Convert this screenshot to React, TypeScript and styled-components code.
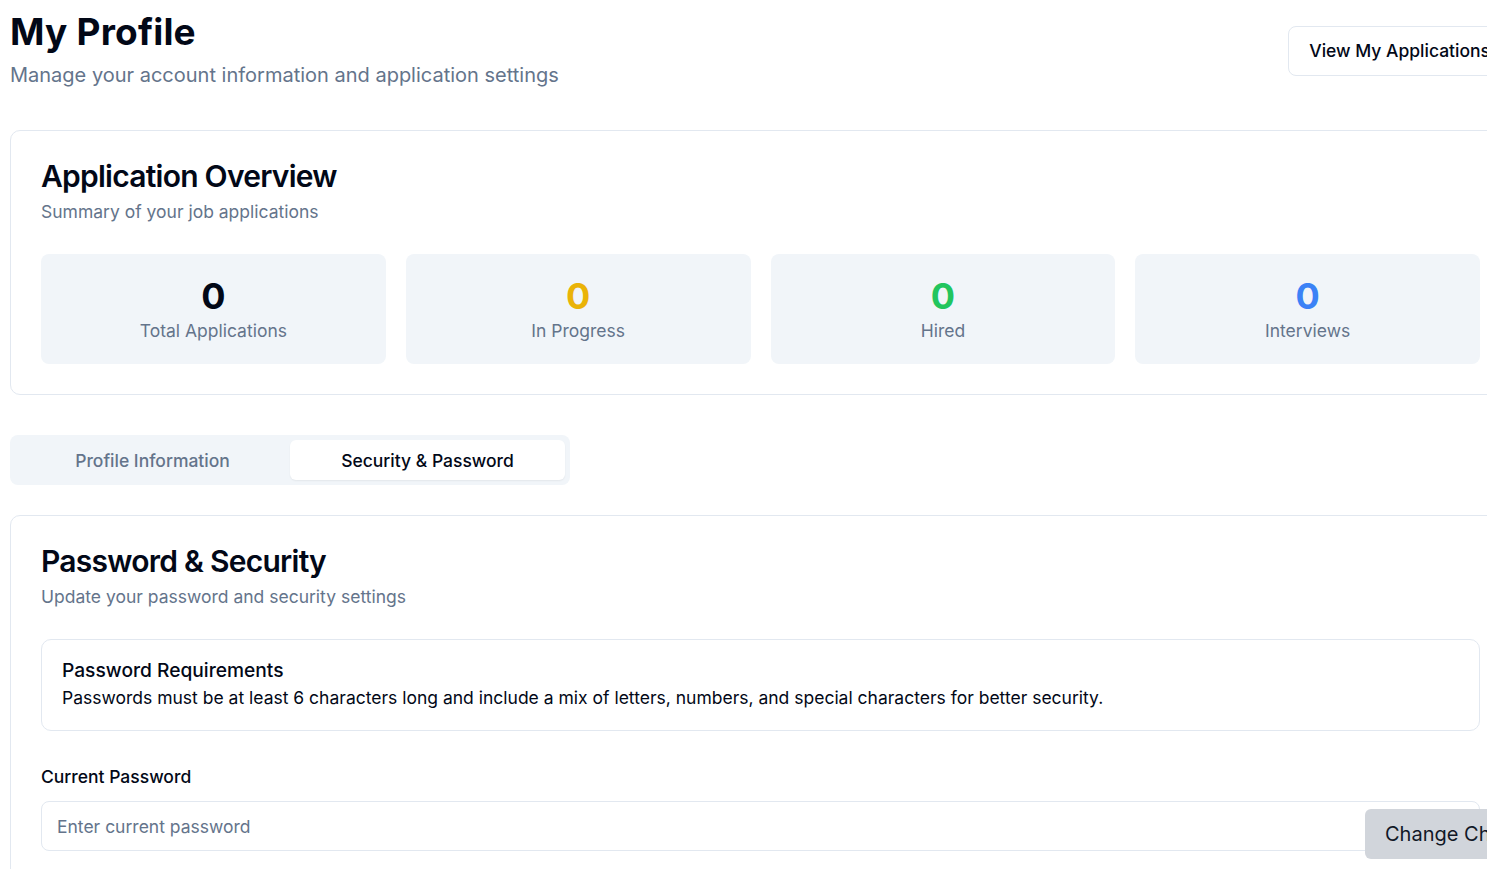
import React from "react";
import styled, { createGlobalStyle } from "styled-components";

const GlobalStyle = createGlobalStyle`
  html, body {
    margin: 0;
    padding: 0;
    background: #ffffff;
    overflow: hidden;
  }
  * { box-sizing: border-box; }
  body {
    font-family: Inter, "Noto Sans", "Liberation Sans", sans-serif;
    color: #020817;
  }
`;

const Page = styled.div`
  width: 1521px;
  padding: 12px 10px 40px 10px;
`;

const Header = styled.header`
  display: flex;
  justify-content: space-between;
  align-items: center;
`;

const TitleBlock = styled.div`
  display: flex;
  flex-direction: column;
`;

const PageTitle = styled.h1`
  margin: 0;
  font-size: 37px;
  line-height: 40px;
  font-weight: 700;
  color: #020817;
  letter-spacing: 0.2px;
`;

const PageSubtitle = styled.p`
  margin: 9px 0 0 0;
  font-size: 20px;
  line-height: 28px;
  color: #64748b;
`;

const OutlineButton = styled.button`
  height: 50px;
  padding: 0 20px;
  border: 1px solid #e2e8f0;
  border-radius: 8px;
  background: #ffffff;
  font-family: inherit;
  font-size: 17.5px;
  font-weight: 500;
  color: #020817;
  cursor: pointer;
`;

const Card = styled.section<{ $mt: number }>`
  margin-top: ${(p) => p.$mt}px;
  border: 1px solid #e2e8f0;
  border-radius: 10px;
  background: #ffffff;
  padding: 27px 30px 30px 30px;
`;

const CardTitle = styled.h2`
  margin: 0;
  font-size: 30px;
  line-height: 36px;
  font-weight: 600;
  color: #020817;
  letter-spacing: -0.75px;
`;

const CardSubtitle = styled.p`
  margin: 4px 0 28px 0;
  font-size: 17.5px;
  line-height: 28px;
  color: #64748b;
`;

const StatGrid = styled.div`
  display: grid;
  grid-template-columns: repeat(4, 1fr);
  gap: 20px;
`;

const StatBox = styled.div`
  height: 110px;
  padding-top: 22px;
  background: #f1f5f9;
  border-radius: 8px;
  display: flex;
  flex-direction: column;
  align-items: center;
`;

const StatValue = styled.div<{ $color: string }>`
  font-size: 36px;
  line-height: 40px;
  font-weight: 700;
  color: ${(p) => p.$color};
`;

const StatLabel = styled.div`
  margin-top: 1px;
  font-size: 17.5px;
  line-height: 28px;
  color: #64748b;
`;

const TabList = styled.div`
  margin-top: 40px;
  width: 560px;
  height: 50px;
  padding: 5px;
  background: #f1f5f9;
  border-radius: 8px;
  display: grid;
  grid-template-columns: 1fr 1fr;
`;

const Tab = styled.button<{ $active?: boolean }>`
  border: none;
  border-radius: 6px;
  font-family: inherit;
  font-size: 17.5px;
  font-weight: 500;
  cursor: pointer;
  background: ${(p) => (p.$active ? "#ffffff" : "transparent")};
  color: ${(p) => (p.$active ? "#020817" : "#64748b")};
  box-shadow: ${(p) => (p.$active ? "0 1px 2px rgba(0,0,0,0.06)" : "none")};
`;

const InfoBox = styled.div`
  border: 1px solid #e2e8f0;
  border-radius: 10px;
  padding: 16px 20px 18px 20px;
`;

const InfoTitle = styled.div`
  font-size: 19.2px;
  line-height: 28px;
  font-weight: 500;
  color: #020817;
`;

const InfoText = styled.div`
  font-size: 17.5px;
  line-height: 28px;
  color: #020817;
`;

const Field = styled.div`
  margin-top: 32px;
  display: flex;
  flex-direction: column;
  gap: 10px;
`;

const Label = styled.label`
  font-size: 17.5px;
  line-height: 28px;
  font-weight: 500;
  color: #020817;
`;

const Input = styled.input`
  height: 50px;
  width: 100%;
  border: 1px solid #e2e8f0;
  border-radius: 8px;
  padding: 0 15px;
  font-family: inherit;
  font-size: 17.5px;
  color: #020817;
  background: #ffffff;
  outline: none;
  &::placeholder {
    color: #64748b;
  }
`;

const FloatingButton = styled.button`
  position: fixed;
  left: 1365px;
  bottom: 10px;
  height: 50px;
  padding: 0 20px;
  border: none;
  border-radius: 6px;
  background: #d1d5db;
  font-family: inherit;
  font-size: 20px;
  color: #111827;
  white-space: nowrap;
  cursor: pointer;
`;

const stats = [
  { value: 0, label: "Total Applications", color: "#020817" },
  { value: 0, label: "In Progress", color: "#eab308" },
  { value: 0, label: "Hired", color: "#22c55e" },
  { value: 0, label: "Interviews", color: "#3b82f6" },
];

export default function App() {
  return (
    <>
      <GlobalStyle />
      <Page>
        <Header>
          <TitleBlock>
            <PageTitle>My Profile</PageTitle>
            <PageSubtitle>Manage your account information and application settings</PageSubtitle>
          </TitleBlock>
          <OutlineButton>View My Applications</OutlineButton>
        </Header>

        <Card $mt={41}>
          <CardTitle>Application Overview</CardTitle>
          <CardSubtitle>Summary of your job applications</CardSubtitle>
          <StatGrid>
            {stats.map((s) => (
              <StatBox key={s.label}>
                <StatValue $color={s.color}>{s.value}</StatValue>
                <StatLabel>{s.label}</StatLabel>
              </StatBox>
            ))}
          </StatGrid>
        </Card>

        <TabList>
          <Tab>Profile Information</Tab>
          <Tab $active>Security &amp; Password</Tab>
        </TabList>

        <Card $mt={30}>
          <CardTitle>Password &amp; Security</CardTitle>
          <CardSubtitle>Update your password and security settings</CardSubtitle>
          <InfoBox>
            <InfoTitle>Password Requirements</InfoTitle>
            <InfoText>
              Passwords must be at least 6 characters long and include a mix of letters, numbers, and special characters for better security.
            </InfoText>
          </InfoBox>
          <Field>
            <Label htmlFor="current-password">Current Password</Label>
            <Input id="current-password" type="password" placeholder="Enter current password" />
          </Field>
        </Card>
      </Page>
      <FloatingButton>Change Chat Mode</FloatingButton>
    </>
  );
}
